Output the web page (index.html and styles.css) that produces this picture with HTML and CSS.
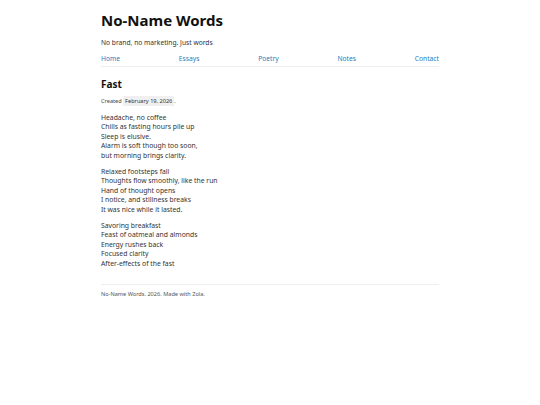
FILE: index.html
```html
<!DOCTYPE html>
<html lang="en">
<head>
<meta charset="utf-8">
<title>Fast</title>
<link rel="stylesheet" href="styles.css">
</head>
<body>
<div class="page">
  <header class="site-header">
    <h1 class="site-title">No-Name Words</h1>
    <p class="tagline">No brand, no marketing. Just words</p>
    <nav class="nav">
      <a href="#">Home</a>
      <a href="#">Essays</a>
      <a href="#">Poetry</a>
      <a href="#">Notes</a>
      <a href="#">Contact</a>
    </nav>
  </header>
  <main class="post">
    <h2 class="post-title">Fast</h2>
    <p class="meta">Created <time class="date">February 19, 2026</time>.</p>
    <p class="stanza">Headache, no coffee<br>Chills as fasting hours pile up<br>Sleep is elusive.<br>Alarm is soft though too soon,<br>but morning brings clarity.</p>
    <p class="stanza">Relaxed footsteps fall<br>Thoughts flow smoothly, like the run<br>Hand of thought opens<br>I notice, and stillness breaks<br>It was nice while it lasted.</p>
    <p class="stanza">Savoring breakfast<br>Feast of oatmeal and almonds<br>Energy rushes back<br>Focused clarity<br>After-effects of the fast</p>
  </main>
  <footer class="footer">No-Name Words. 2026. Made with Zola.</footer>
</div>
</body>
</html>
```
FILE: styles.css
```css
html, body {
  margin: 0;
  padding: 0;
  background: #fff;
}
body {
  font-family: "Noto Sans", "Open Sans", sans-serif;
  color: #333;
  font-size: 7px;
  line-height: 1.2;
}
.page {
  width: 338px;
  margin: 0 auto;
  padding-top: 9px;
}
.site-title {
  margin: 0;
  font-size: 15px;
  font-weight: 700;
  color: #111;
  line-height: 22px;
}
.tagline {
  margin: 8px 0 0;
  font-size: 6.7px;
  color: #333;
}
.nav {
  display: flex;
  justify-content: space-between;
  margin-top: 8px;
  padding-bottom: 3px;
  border-bottom: 1px solid #eee;
}
.nav a {
  color: #2a7cc0;
  text-decoration: none;
  font-size: 6.7px;
}
.post {
  padding-top: 10px;
  padding-bottom: 9px;
  border-bottom: 1px solid #eee;
}
.post-title {
  margin: 0;
  font-size: 10px;
  font-weight: 700;
  color: #111;
  line-height: 15px;
}
.meta {
  margin: 6px 0 8px;
  font-size: 5.6px;
  color: #444;
}
.date {
  background: #f0f0f0;
  padding: 1px 2px;
  color: #333;
}
.stanza {
  margin: 0 0 6.5px;
  font-size: 6.8px;
  line-height: 9.5px;
  color: #333;
}
.footer {
  padding-top: 6px;
  font-size: 5.6px;
  color: #555;
}
```
